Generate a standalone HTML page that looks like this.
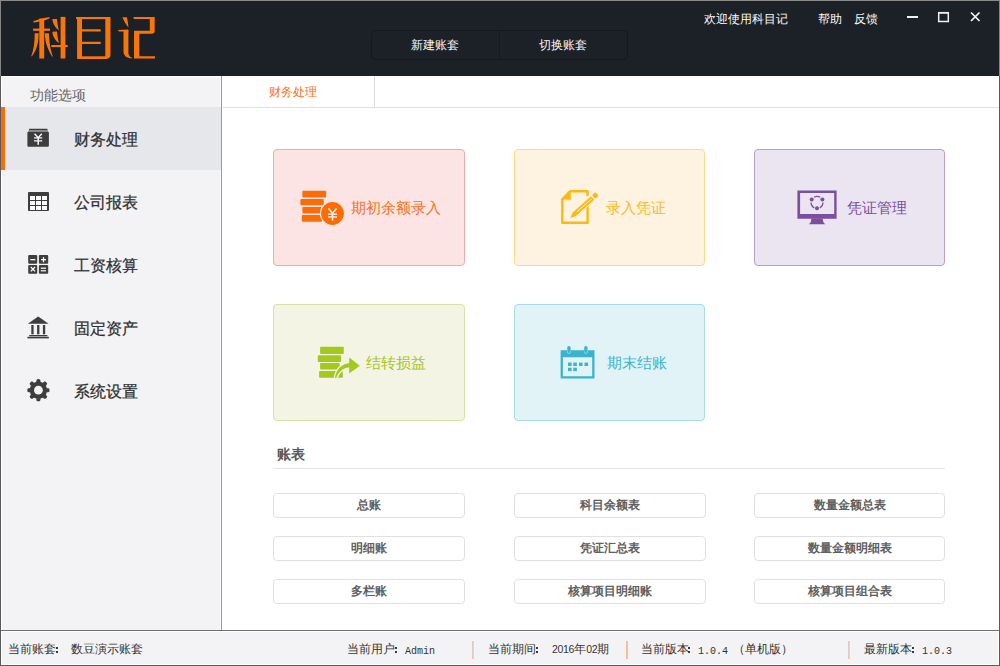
<!DOCTYPE html>
<html><head><meta charset="utf-8">
<style>
*{margin:0;padding:0;box-sizing:border-box}
html,body{width:1000px;height:666px;overflow:hidden;background:#fff;font-family:"Liberation Sans",sans-serif}
.abs{position:absolute}
.t{position:absolute;white-space:nowrap;line-height:1}
#win{position:absolute;left:0;top:0;width:1000px;height:666px;border:1px solid #5a5a5a;border-top-color:#8a8a8a}
#hdr{position:absolute;left:0;top:0;width:1000px;height:76px;background:#1c2128}
#side{position:absolute;left:0;top:76px;width:222px;height:554px;background:#f3f3f5;border-right:1px solid #9a9a9a}
#status{position:absolute;left:0;top:630px;width:1000px;height:36px;background:#f3f3f5;border-top:1px solid #6e6e6e}
.card{position:absolute;width:192px;height:117px;border:1px solid;border-radius:4px}
.btn{position:absolute;width:192px;height:25px;border:1px solid #e0e0e0;border-radius:4px;background:#fff;color:#606060;font-size:12px;font-weight:bold;text-align:center;line-height:23px}
.sitem{position:absolute;left:74px;font-size:16px;color:#2e2e2e;-webkit-text-stroke:0.25px #333}
.st{position:absolute;top:643px;font-size:12px;color:#333;line-height:12px}
.mono{font-family:"Liberation Mono",monospace;font-size:10px}
.sep{position:absolute;top:641px;width:1px;height:18px;background:#b4b4b8}
.dg{font-size:10.5px;letter-spacing:-0.3px}
.st.mono{top:646px}
</style></head><body>
<div id="hdr"></div>
<div id="side"></div>
<div id="status"></div>
<div id="win"></div>
<div class="abs" style="left:0;top:0;width:1px;height:76px;background:#868686"></div>
<div class="abs" style="left:999px;top:0;width:1px;height:76px;background:#868686"></div>
<div class="abs" style="left:1px;top:77px;width:220px;height:1px;background:#fafafa"></div>
<div class="abs" style="left:998px;top:631px;width:1px;height:34px;background:#fff"></div>
<div class="abs" style="left:1px;top:664px;width:998px;height:1px;background:#fff"></div>
<div class="abs" style="left:1px;top:631px;width:1px;height:34px;background:#fff"></div>

<!-- logo -->
<svg class="abs" style="left:0;top:0" width="200" height="76" viewBox="0 0 200 76">
<g fill="#fa7508">
<!-- 科 -->
<path d="M49.8 16.9 C44 17.6 38 19.3 33.2 21.2 L33.8 22.5 C38 21.8 45 20.6 49.2 18.4Z"/>
<rect x="33" y="28.6" width="17" height="2.2"/>
<rect x="39.3" y="18.5" width="4.9" height="40"/>
<path d="M34.7 33.3 L38.7 33.3 C38.6 42 37 50 31.9 56.2 L31.2 56.3 C33.8 50 34.7 42 34.7 33.3Z"/>
<path d="M44.8 33.3 L49 33.3 C49.2 43 50.5 50 52.8 56.3 L52.2 56.7 C48 50 45 43 44.8 33.3Z"/>
<path d="M52.4 19.1 L57 19 C57.4 23 58 27 58.9 30.4 C55.5 28 52.6 24 52.4 19.1Z"/>
<path d="M52.4 31.7 L57 31.6 C57.4 35.6 58 39.6 58.9 43.1 C55.5 40.6 52.6 36.6 52.4 31.7Z"/>
<rect x="51.3" y="45" width="16.4" height="2.1"/>
<rect x="60.6" y="16.9" width="4.8" height="41.6"/>
<!-- 目 -->
<path d="M76 16.9 H110.5 V54.5 Q110.5 58.9 106 58.9 H77.1 V20 Q77.1 18.6 76 18.4Z"/>
<!-- 记 -->
<path d="M122.4 17.2 L126.9 17.2 C127.6 20.5 128.2 24 128.5 27.5 C126 24.5 124 21 122.4 17.2Z"/>
<path d="M117.9 29.9 L128.2 29.6 L128.2 31.6 L119 31.6Z"/>
<path d="M123.5 30 L128.4 30 L128.4 53 Q128.6 56.5 132 57.8 L131.8 58.6 Q123.5 57.5 123.5 52Z"/>
<path d="M133.6 16.9 H154.7 V31 Q154.7 33.8 151.8 33.8 H139.3 V56.3 H155 V58.5 H134 V30.8 H149.8 V19.1 H133.6Z"/>
</g>
<g fill="#1c2128">
<rect x="82" y="19.1" width="23.3" height="37.2"/>
</g>
<g fill="#fa7508">
<path d="M82 29.3 H100.5 Q101.3 30.4 100.5 31.5 H82Z"/>
<path d="M82 41.7 H100.5 Q101.3 42.8 100.5 43.9 H82Z"/>
</g>
</svg>

<!-- header buttons -->
<div class="abs" style="left:371px;top:30px;width:257px;height:30px;border:1px solid #15191d;border-radius:4px"></div>
<div class="abs" style="left:499px;top:31px;width:1px;height:28px;background:#161a1f"></div>
<div class="t" style="left:411px;top:39px;font-size:12px;color:#fafafa">新建账套</div>
<div class="t" style="left:539px;top:39px;font-size:12px;color:#fafafa">切换账套</div>

<div class="t" style="left:704px;top:13px;font-size:12px;color:#fafafa">欢迎使用科目记</div>
<div class="t" style="left:818px;top:13px;font-size:12px;color:#fafafa">帮助</div>
<div class="t" style="left:854px;top:13px;font-size:12px;color:#fafafa">反馈</div>
<!-- window controls -->
<svg class="abs" style="left:900px;top:0" width="100" height="30" viewBox="900 0 100 30">
<rect x="907" y="16" width="11" height="2" fill="#f0f0f0"/>
<rect x="938.7" y="12.7" width="9.6" height="8.8" fill="none" stroke="#f0f0f0" stroke-width="1.5"/><rect x="938" y="12" width="11" height="1.6" fill="#f0f0f0"/>
<path d="M971 12.5 L979.5 21 M979.5 12.5 L971 21" stroke="#f4f4f4" stroke-width="1.7"/>
</svg>

<!-- sidebar -->
<div class="abs" style="left:1px;top:76px;width:220px;height:1px;background:#fff"></div>
<div class="abs" style="left:1px;top:76px;width:1px;height:554px;background:#fff"></div>
<div class="t" style="left:30px;top:88px;font-size:14px;color:#666">功能选项</div>
<div class="abs" style="left:220px;top:76px;width:1px;height:554px;background:#fafafb"></div>
<div class="abs" style="left:1px;top:107px;width:220px;height:63px;background:#e6e7ea"></div>
<div class="abs" style="left:1px;top:107px;width:4px;height:63px;background:#fc6c05"></div>

<svg class="abs" style="left:0;top:100px" width="70" height="320" viewBox="0 100 70 320">
<g fill="#3d3d3d">
<!-- wallet -->
<rect x="29" y="128.8" width="18.5" height="1.6" rx="0.5"/>
<rect x="28.5" y="130.4" width="19.5" height="1.4" fill="#8d8d8f"/>
<rect x="27.4" y="131.8" width="21.5" height="15" rx="1"/>
<!-- table -->
<rect x="28" y="192" width="21" height="19" rx="1"/>
<!-- calc -->
<rect x="28.2" y="255" width="9" height="8.7" rx="1"/>
<rect x="38.9" y="255" width="9.3" height="8.7" rx="1"/>
<rect x="28.2" y="265" width="9" height="8.7" rx="1"/>
<rect x="38.9" y="265" width="9.3" height="8.7" rx="1"/>
<!-- bank -->
<path d="M38.2 316.5 L48.6 323.8 L27.8 323.8Z"/>
<rect x="31.3" y="325" width="2.3" height="9.3"/>
<rect x="37.1" y="325" width="2.3" height="9.3"/>
<rect x="42.9" y="325" width="2.3" height="9.3"/>
<rect x="29.2" y="335" width="18.2" height="1.3"/>
<rect x="27.4" y="336.8" width="21.5" height="1.6"/>
<!-- gear -->
<g transform="translate(38.4 390.2)">
<circle r="8.6" />
<path d="M-2.3 -8 L-1.7 -10.8 Q0 -11.4 1.7 -10.8 L2.3 -8Z" transform="rotate(0)"/><path d="M-2.3 -8 L-1.7 -10.8 Q0 -11.4 1.7 -10.8 L2.3 -8Z" transform="rotate(45)"/><path d="M-2.3 -8 L-1.7 -10.8 Q0 -11.4 1.7 -10.8 L2.3 -8Z" transform="rotate(90)"/><path d="M-2.3 -8 L-1.7 -10.8 Q0 -11.4 1.7 -10.8 L2.3 -8Z" transform="rotate(135)"/><path d="M-2.3 -8 L-1.7 -10.8 Q0 -11.4 1.7 -10.8 L2.3 -8Z" transform="rotate(180)"/><path d="M-2.3 -8 L-1.7 -10.8 Q0 -11.4 1.7 -10.8 L2.3 -8Z" transform="rotate(225)"/><path d="M-2.3 -8 L-1.7 -10.8 Q0 -11.4 1.7 -10.8 L2.3 -8Z" transform="rotate(270)"/><path d="M-2.3 -8 L-1.7 -10.8 Q0 -11.4 1.7 -10.8 L2.3 -8Z" transform="rotate(315)"/>
<circle r="4.4" fill="#f3f3f5"/>
</g>
</g>
<g fill="#fff">
<!-- yen -->
<path d="M34.6 133.8 L38.2 137.8 L41.8 133.8" fill="none" stroke="#fff" stroke-width="1.3"/>
<rect x="37.5" y="137.4" width="1.4" height="7.4"/>
<rect x="34" y="137.3" width="8.2" height="1.2"/>
<rect x="34" y="140.3" width="8.2" height="1.2"/>
<!-- table cells -->
<rect x="30" y="196" width="5" height="4"/><rect x="36" y="196" width="5" height="4"/><rect x="42" y="196" width="5" height="4"/>
<rect x="30" y="201" width="5" height="4"/><rect x="36" y="201" width="5" height="4"/><rect x="42" y="201" width="5" height="4"/>
<rect x="30" y="206" width="5" height="4"/><rect x="36" y="206" width="5" height="4"/><rect x="42" y="206" width="5" height="4"/>
<!-- calc symbols -->
<rect x="30.3" y="259" width="5" height="1.3"/>
<rect x="41" y="259" width="5" height="1.3"/><rect x="42.85" y="257.2" width="1.3" height="5"/>
<path d="M30.8 267 L35 271.4 M35 267 L30.8 271.4" stroke="#fff" stroke-width="1.3"/>
<rect x="40.8" y="267.6" width="5.2" height="1.2"/><rect x="40.8" y="270.2" width="5.2" height="1.2"/>
</g>
</svg>

<div class="t sitem" style="top:132px">财务处理</div>
<div class="t sitem" style="top:195px">公司报表</div>
<div class="t sitem" style="top:258px">工资核算</div>
<div class="t sitem" style="top:321px">固定资产</div>
<div class="t sitem" style="top:384px">系统设置</div>

<!-- tab bar -->
<div class="abs" style="left:223px;top:107px;width:776px;height:1px;background:#e1e1e1"></div>
<div class="abs" style="left:374px;top:76px;width:1px;height:31px;background:#dcdcdc"></div>
<div class="t" style="left:269px;top:86px;font-size:12px;color:#f7711b">财务处理</div>

<!-- cards -->
<div class="card" style="left:273px;top:149px;background:#fce4e4;border-color:#f3a9a9"></div>
<div class="card" style="left:514px;top:149px;width:191px;background:#fef3e1;border-color:#fdd985"></div>
<div class="card" style="left:754px;top:149px;width:191px;background:#ebe5f1;border-color:#b89fcf"></div>
<div class="card" style="left:273px;top:304px;background:#f3f4e3;border-color:#d9e0aa"></div>
<div class="card" style="left:514px;top:304px;width:191px;background:#e2f3f8;border-color:#a8dbe8"></div>

<div class="t" style="left:351px;top:200px;font-size:15px;color:#f7711b">期初余额录入</div>
<div class="t" style="left:606px;top:200px;font-size:15px;color:#fdb71c">录入凭证</div>
<div class="t" style="left:847px;top:200px;font-size:15px;color:#7b4e9d">凭证管理</div>
<div class="t" style="left:366px;top:355px;font-size:15px;color:#a8c422">结转损益</div>
<div class="t" style="left:607px;top:355px;font-size:15px;color:#3ab5cd">期末结账</div>

<svg class="abs" style="left:0;top:0" width="1000" height="666" viewBox="0 0 1000 666">
<!-- coins -->
<g fill="#fc6c05">
<rect x="302.4" y="190.7" width="23.7" height="6.8" rx="0.8"/>
<rect x="300.4" y="198.9" width="23.3" height="6.4" rx="0.8"/>
<rect x="302.4" y="207" width="19.3" height="6.4" rx="0.8"/>
<rect x="301.8" y="215" width="20.2" height="6.8" rx="0.8"/>
<circle cx="332.5" cy="213.5" r="12.6" fill="#fce4e4"/>
<circle cx="332.5" cy="213.5" r="11.4"/>
</g>
<path d="M328.5 208.5 L332.5 213.5 L336.5 208.5" fill="none" stroke="#fff" stroke-width="1.4"/>
<rect x="331.8" y="213" width="1.4" height="7.6" fill="#fff"/>
<rect x="328" y="213.6" width="9" height="1.2" fill="#fff"/>
<rect x="328" y="216.4" width="9" height="1.2" fill="#fff"/>

<!-- doc + pencil -->
<g fill="none" stroke="#fdb812" stroke-width="2.4" stroke-linejoin="round">
<path d="M587.6 203 L587.6 222.7 L562.3 222.7 L562.3 199.3 L570 191.3 L587.6 191.3 L587.6 196"/>
</g>
<path d="M561.5 199.5 L570.5 190.5 L571 199.8Z" fill="#fdb812"/>
<g transform="translate(570.3 218) rotate(-42)">
<path d="M-1 0 L5.5 -3.4 L31 -3.4 L31 3.4 L5.5 3.4Z" fill="#fef3e1"/>
<path d="M0 0 L5.5 -2.4 L30 -2.4 L30 2.4 L5.5 2.4Z" fill="#fdb812"/>
<rect x="9" y="-0.5" width="20" height="1" fill="#fef3e1" opacity="0.8"/>
<rect x="31.3" y="-2.4" width="4.6" height="4.8" rx="1" fill="#fdb812"/>
</g>

<!-- monitor -->
<g fill="#7b4f9e">
<path fill-rule="evenodd" d="M797.4 190.4 H836.6 V218.8 H797.4Z M800.1 192.9 V214.1 H834.2 V192.9Z"/>
<path d="M811.5 218.5 H822.6 L823.5 222.5 L825.3 224.3 H808.8 L810.6 222.5Z"/>
<circle cx="811.7" cy="199.6" r="2"/>
<circle cx="822.4" cy="199.6" r="2"/>
<circle cx="817" cy="208.3" r="2"/>
</g>
<g fill="none" stroke="#7b4f9e" stroke-width="1.2">
<path d="M814 197.2 A6.5 6.5 0 0 1 820.2 197.2"/>
<path d="M811 202.5 A6.5 6.5 0 0 0 814.3 208"/>
<path d="M823 202.5 A6.5 6.5 0 0 1 819.8 208"/>
</g>

<!-- green stack + arrow -->
<g fill="#a5c81e">
<rect x="320.1" y="346.8" width="23.7" height="7.1" rx="0.8"/>
<rect x="317.8" y="355.2" width="23.3" height="6.8" rx="0.8"/>
<rect x="320.1" y="363" width="19.6" height="6.4" rx="0.8"/>
<rect x="319.1" y="371.1" width="23.7" height="6.7" rx="0.8"/>
</g>
<path d="M334.2 378.9 Q335.7 364 350.5 362.3 L350.5 367.7 Q340.4 368.4 336.7 378.5Z" fill="#a5c81e" stroke="#f3f4e3" stroke-width="1.3"/>
<path d="M349.2 357.6 L359.8 365.7 L349.2 373.6Z" fill="#a5c81e"/>

<!-- calendar -->
<g fill="#3ab4cc">
<path fill-rule="evenodd" d="M560.6 350.2 H594.5 V378.6 H560.6Z M562.9 357.2 V376.2 H592.2 V357.2Z"/>
</g>
<rect x="567" y="345.2" width="3.8" height="8.4" rx="1.9" fill="#e2f3f8"/>
<rect x="584" y="345.2" width="3.8" height="8.4" rx="1.9" fill="#e2f3f8"/>
<rect x="567.3" y="346" width="3.3" height="7" rx="1.6" fill="#3ab4cc"/>
<rect x="584.2" y="346" width="3.3" height="7" rx="1.6" fill="#3ab4cc"/>
<g fill="#3ab4cc">
<rect x="568" y="362.6" width="3.6" height="3.4"/><rect x="573.3" y="362.6" width="3.6" height="3.4"/><rect x="579" y="362.6" width="3.6" height="3.4"/><rect x="584.5" y="362.6" width="3.6" height="3.4"/>
<rect x="568" y="367.7" width="3.6" height="3.4"/><rect x="573.3" y="367.7" width="3.6" height="3.4"/>
</g>
</svg>

<!-- 账表 -->
<div class="t" style="left:277px;top:447px;font-size:14px;font-weight:bold;color:#585858">账表</div>
<div class="abs" style="left:274px;top:468px;width:671px;height:1px;background:#e3e3e3"></div>

<div class="btn" style="left:273px;top:493px">总账</div>
<div class="btn" style="left:514px;top:493px">科目余额表</div>
<div class="btn" style="left:754px;top:493px;width:191px">数量金额总表</div>
<div class="btn" style="left:273px;top:536px">明细账</div>
<div class="btn" style="left:514px;top:536px">凭证汇总表</div>
<div class="btn" style="left:754px;top:536px;width:191px">数量金额明细表</div>
<div class="btn" style="left:273px;top:579px">多栏账</div>
<div class="btn" style="left:514px;top:579px">核算项目明细账</div>
<div class="btn" style="left:754px;top:579px;width:191px">核算项目组合表</div>

<!-- status bar -->
<div class="abs" style="left:1px;top:631px;width:998px;height:1px;background:#fff"></div>
<div class="st" style="left:8px">当前账套</div><div class="abs" style="left:56px;top:647px;width:2px;height:2px;background:#3a3a3a"></div><div class="abs" style="left:56px;top:651px;width:2px;height:2px;background:#3a3a3a"></div>
<div class="st" style="left:71px">数豆演示账套</div>
<div class="st" style="left:347px">当前用户</div><div class="abs" style="left:395px;top:647px;width:2px;height:2px;background:#3a3a3a"></div><div class="abs" style="left:395px;top:651px;width:2px;height:2px;background:#3a3a3a"></div>
<div class="st mono" style="left:405px">Admin</div>
<div class="sep" style="left:472px;background:#e2cbbd"></div><div class="sep" style="left:473px;background:#bcdff3"></div>
<div class="st" style="left:488px">当前期间</div><div class="abs" style="left:536px;top:647px;width:2px;height:2px;background:#3a3a3a"></div><div class="abs" style="left:536px;top:651px;width:2px;height:2px;background:#3a3a3a"></div>
<div class="st" style="left:552px"><span class="dg">2016</span>年<span class="dg">02</span>期</div>
<div class="sep" style="left:626px;background:#f0bb9f"></div><div class="sep" style="left:627px;background:#a6daf3"></div>
<div class="st" style="left:641px">当前版本</div><div class="abs" style="left:688px;top:647px;width:2px;height:2px;background:#3a3a3a"></div><div class="abs" style="left:688px;top:651px;width:2px;height:2px;background:#3a3a3a"></div>
<div class="st mono" style="left:698px">1.0.4</div>
<div class="st" style="left:733px">（单机版）</div>
<div class="sep" style="left:848px;background:#e2cbbd"></div><div class="sep" style="left:849px;background:#bcdff3"></div>
<div class="st" style="left:864px">最新版本</div><div class="abs" style="left:912px;top:647px;width:2px;height:2px;background:#3a3a3a"></div><div class="abs" style="left:912px;top:651px;width:2px;height:2px;background:#3a3a3a"></div>
<div class="st mono" style="left:922px">1.0.3</div>
</body></html>
